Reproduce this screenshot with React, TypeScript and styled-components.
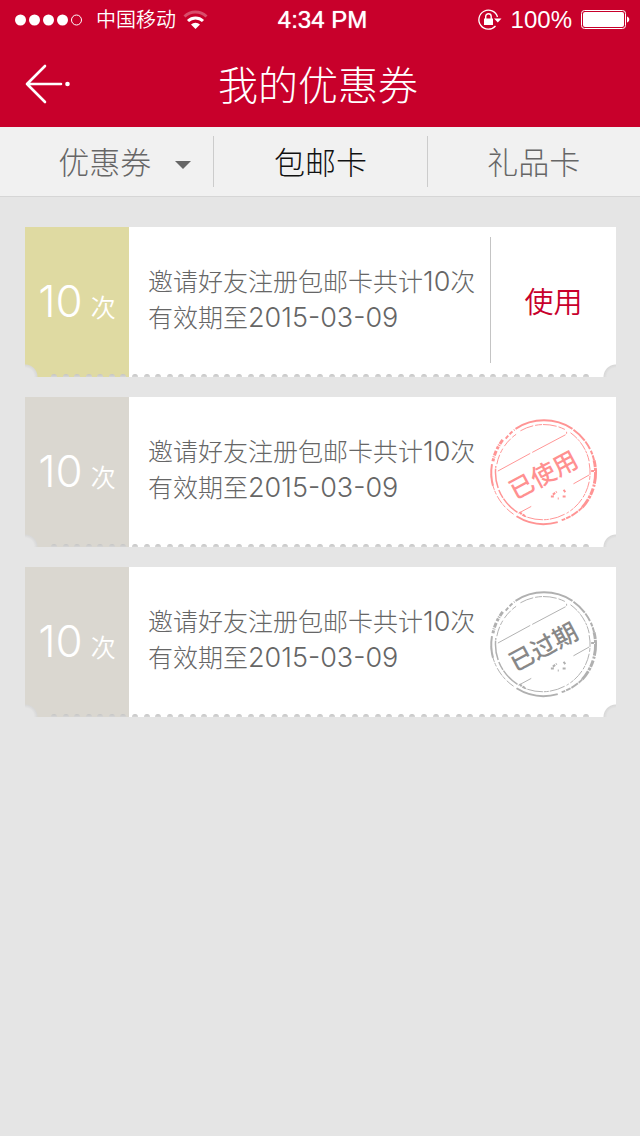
import React from "react";
import styled, { createGlobalStyle } from "styled-components";

const GlobalStyle = createGlobalStyle`
  * { box-sizing: border-box; }
  body {
    margin: 0;
    background: #e5e5e5;
    font-family: "Noto Sans CJK SC", sans-serif;
    font-weight: 300;
  }
  button { border: 0; background: none; padding: 0; font: inherit; color: inherit; cursor: pointer; }
  svg { display: block; overflow: visible; }
`;

const Header = styled.header`
  background: #c8002b;
  color: #fff;
`;

const StatusBar = styled.div`
  display: grid;
  grid-template-columns: 1fr auto 1fr;
  align-items: center;
  height: 40px;
  padding: 0 10px 0 15px;
  font: 400 24px/40px "Liberation Sans", "Noto Sans CJK SC", sans-serif;
`;

const StatusGroup = styled.div<{ $end?: boolean }>`
  display: flex;
  align-items: center;
  justify-content: ${(p) => (p.$end ? "flex-end" : "flex-start")};
  gap: ${(p) => (p.$end ? 9 : 7)}px;
`;

const Carrier = styled.span`
  margin-left: 6px;
  font-size: 20px;
  font-weight: 350;
`;

const Clock = styled.time`
  text-shadow: 0 0 1px #fff;
`;

const NavBar = styled.div`
  display: grid;
  grid-template-columns: 70px 1fr 74px;
  align-items: center;
  height: 87px;
`;

const BackButton = styled.button`
  padding-left: 24px;
`;

const Title = styled.h1`
  margin: 0;
  padding-bottom: 2px;
  font-size: 40px;
  font-weight: 300;
  line-height: 60px;
  text-align: center;
`;

const Tabs = styled.nav`
  display: grid;
  grid-template-columns: repeat(3, 1fr);
  height: 70px;
  padding: 9px 0;
  background: #f1f1f1;
  border-bottom: 1px solid #d6d6d6;
`;

const Tab = styled.button<{ $active?: boolean }>`
  display: flex;
  align-items: center;
  justify-content: center;
  gap: 24px;
  padding-bottom: 2px;
  font-size: 31px;
  line-height: 48px;
  color: ${(p) => (p.$active ? "#111" : "#666")};
  & + & { border-left: 1px solid #ccc; }
`;

const TabMenu = styled(Tab)`
  padding-left: 36px;
  svg { margin-top: 8px; }
`;

const CardList = styled.main`
  display: flex;
  flex-direction: column;
  gap: 20px;
  padding: 30px 24px 30px 25px;
`;

const Card = styled.article`
  position: relative;
  display: flex;
  min-height: 150px;
  background: #fff;
`;

const Count = styled.div<{ $active?: boolean }>`
  display: flex;
  align-items: baseline;
  justify-content: center;
  gap: 8px;
  width: 104px;
  padding-top: 44px;
  background: ${(p) => (p.$active ? "#dfdaa2" : "#dad7d0")};
  color: #fff;
  font: 350 25px/60px "Noto Sans CJK SC", sans-serif;
`;

const Amount = styled.span`
  font-family: "Inter", sans-serif;
  font-weight: 300;
  font-size: 44px;
`;

const Details = styled.div`
  flex: 1;
  padding: 35px 0 0 19px;
  color: #666;
  font: 300 25px/36px "Noto Sans CJK SC", sans-serif;
  white-space: nowrap;
  p { margin: 0; height: 36px; }
`;

const Figures = styled.span`
  font-family: "Inter", sans-serif;
  font-size: 27px;
`;

const UseButton = styled.button`
  width: 126px;
  margin: 10px 0 14px;
  border-left: 1px solid #c4c4c4;
  color: #c8002b;
  font-size: 29px;
  font-weight: 350;
`;

const StampBox = styled.div<{ $low?: boolean }>`
  width: 126px;
  padding-top: ${(p) => (p.$low ? 25 : 23)}px;
`;

const Notch = styled.i<{ $right?: boolean }>`
  position: absolute;
  bottom: 0;
  ${(p) => (p.$right ? "right" : "left")}: 0;
  width: 13px;
  height: 13px;
  background: radial-gradient(circle at ${(p) => (p.$right ? "100%" : "0%")} 100%, #e5e5e5 0 9px, #d8d8d8 12px, transparent 13px);
`;

const Perforation = styled.div`
  position: absolute;
  left: 26px;
  right: 27px;
  bottom: 0;
  display: flex;
  justify-content: space-between;
`;

const Hole = styled.i`
  width: 6px;
  height: 3px;
  border-radius: 3px 3px 0 0;
  background: linear-gradient(#c4c4c4, #d6d6d6);
`;

function CardEdge() {
  return (
    <>
      <Notch />
      <Notch $right />
      <Perforation aria-hidden="true">
        {Array.from({ length: 47 }, (_, i) => <Hole key={i} />)}
      </Perforation>
    </>
  );
}

function Stamp({ label, ink, textInk }: { label: string; ink: string; textInk: string }) {
  return (
    <svg width="108" height="108" viewBox="0 1 110 110" fill="none" stroke={ink} role="img" aria-label={label}>
      <path d="M26 10A53 53 0 0 1 84 10" strokeWidth="2" />
      <path d="M85 11A53 53 0 0 1 106 42" strokeWidth="2" strokeDasharray="16 1 9 2 4 1" />
      <path d="M106 42A53 53 0 0 1 94 90" strokeWidth="3" strokeDasharray="7 1 3 1 12 1 2 2" />
      <path d="M94 90A53 53 0 0 1 73 103" strokeWidth="2" strokeDasharray="5 1 8 1" />
      <path d="M69 105A53 53 0 0 1 27 99" strokeWidth="2" />
      <path d="M24 97A53 53 0 0 1 1 56" strokeWidth="1" strokeDasharray="9 2 4 1" />
      <path d="M3 68A53 53 0 0 1 2 46" strokeWidth="2" />
      <path d="M3 43A53 53 0 0 1 14 20" strokeWidth="3" strokeDasharray="3 1 1 1 5 2" />
      <path d="M16 20A53 53 0 0 1 25 11" strokeWidth="2" strokeDasharray="4 2" />
      <path d="M7 46A48 48 0 0 1 29 14" strokeDasharray="10 2 5 3" />
      <path d="M31 12A48 48 0 0 1 77 11" strokeDasharray="14 2 7 1" />
      <path d="M82 14A48 48 0 0 1 101 43" strokeDasharray="9 1 3 1" />
      <path d="M101 45A48 48 0 0 1 78 96" strokeDasharray="12 1 4 2" />
      <path d="M76 97A48 48 0 0 1 31 97" strokeDasharray="16 1 5 1" />
      <path d="M28 95A48 48 0 0 1 6 48" strokeDasharray="20 1 9 2" strokeWidth="1.500" />
      <path d="M8 53L41 35M43 34L77 16M78 15V13M85 66L101 57" />
      <path d="M29 96L42 89" />
      <path d="M30 95L36 99M62 79h3M64 77l4 -3M75 72l2 3M74 79h3M69 81h1M103 53h6" strokeWidth="2" strokeDasharray="3 1" />
      <text
        x="54"
        y="66"
        transform="rotate(-28 54 56)"
        textAnchor="middle"
        fill={textInk}
        stroke="none"
        fontFamily="Noto Sans CJK SC, sans-serif"
        fontSize="25"
        fontWeight="500"
      >
        {label}
      </text>
    </svg>
  );
}

interface Coupon {
  id: number;
  status: "active" | "used" | "expired";
}

const coupons: Coupon[] = [
  { id: 1, status: "active" },
  { id: 2, status: "used" },
  { id: 3, status: "expired" },
];

function CouponCard({ status }: Coupon) {
  return (
    <Card>
      <Count $active={status === "active"}>
        <Amount>10</Amount>次
      </Count>
      <Details>
        <p>邀请好友注册包邮卡共计<Figures>10</Figures>次</p>
        <p>有效期至<Figures>2015-03-09</Figures></p>
      </Details>
      {status === "active" && <UseButton type="button">使用</UseButton>}
      {status === "used" && (
        <StampBox><Stamp label="已使用" ink="#ff9494" textInk="#ff9090" /></StampBox>
      )}
      {status === "expired" && (
        <StampBox $low><Stamp label="已过期" ink="#b0b0b0" textInk="#888" /></StampBox>
      )}
      <CardEdge />
    </Card>
  );
}

export default function App() {
  return (
    <>
      <GlobalStyle />
      <Header>
        <StatusBar>
          <StatusGroup>
            <svg width="68" height="12" viewBox="0 0 68 12" fill="#fff" aria-hidden="true">
              <circle cx="5.5" cy="6" r="5.5" />
              <circle cx="19.5" cy="6" r="5.5" />
              <circle cx="33.5" cy="6" r="5.5" />
              <circle cx="47.5" cy="6" r="5.5" />
              <circle cx="61.5" cy="6" r="5" fill="none" stroke="#fff" />
            </svg>
            <Carrier>中国移动</Carrier>
            <svg width="25" height="18" viewBox="0 0 25 18" fill="none" stroke="#fff" strokeWidth="3" aria-hidden="true">
              <path d="M1.5 5.5a16 16 0 0 1 22 0" opacity=".3" />
              <path d="M5 10a11 11 0 0 1 15 0" />
              <path d="M12.500 18L8 13.500a6.500 6.500 0 0 1 9 0z" fill="#fff" stroke="none" />
            </svg>
          </StatusGroup>
          <Clock>4:34 PM</Clock>
          <StatusGroup $end>
            <svg width="24" height="22" viewBox="0 0 24 22" fill="none" stroke="#fff" aria-hidden="true">
              <path d="M19.500 8A9.500 9.500 0 1 0 17.500 17" strokeWidth="1.300" />
              <path d="M16 9.500h7.500l-3.700 4z" fill="#fff" stroke="none" />
              <path d="M6 9.500h9v6.500h-9z" fill="#fff" stroke="none" />
              <path d="M7.700 10V7.500a2.700 2.700 0 0 1 5.500 0V10" strokeWidth="1.400" />
            </svg>
            <span>100%</span>
            <svg width="49" height="20" viewBox="0 0 49 20" fill="#fff" aria-hidden="true">
              <rect x=".5" y=".5" width="44" height="18" rx="3" fill="none" stroke="#fff" />
              <rect x="2" y="2" width="41" height="15" rx="2" />
              <path d="M46 6.500c3 1 3 5 0 6z" />
            </svg>
          </StatusGroup>
        </StatusBar>
        <NavBar>
          <BackButton type="button" aria-label="返回">
            <svg width="46" height="40" viewBox="0 0 46 40" fill="none" stroke="#fff" strokeWidth="2.600" strokeLinecap="round" strokeLinejoin="round">
              <path d="M21 2L3 20l18 18M3 20h34" />
              <circle cx="43.500" cy="20" r="2.300" fill="#fff" stroke="none" />
            </svg>
          </BackButton>
          <Title>我的优惠券</Title>
        </NavBar>
      </Header>
      <Tabs>
        <TabMenu type="button">
          优惠券
          <svg width="16" height="8" viewBox="0 0 16 8" fill="#666" aria-hidden="true"><path d="M0 0h16L8 8z" /></svg>
        </TabMenu>
        <Tab type="button" $active>包邮卡</Tab>
        <Tab type="button">礼品卡</Tab>
      </Tabs>
      <CardList>
        {coupons.map((c) => <CouponCard key={c.id} {...c} />)}
      </CardList>
    </>
  );
}
